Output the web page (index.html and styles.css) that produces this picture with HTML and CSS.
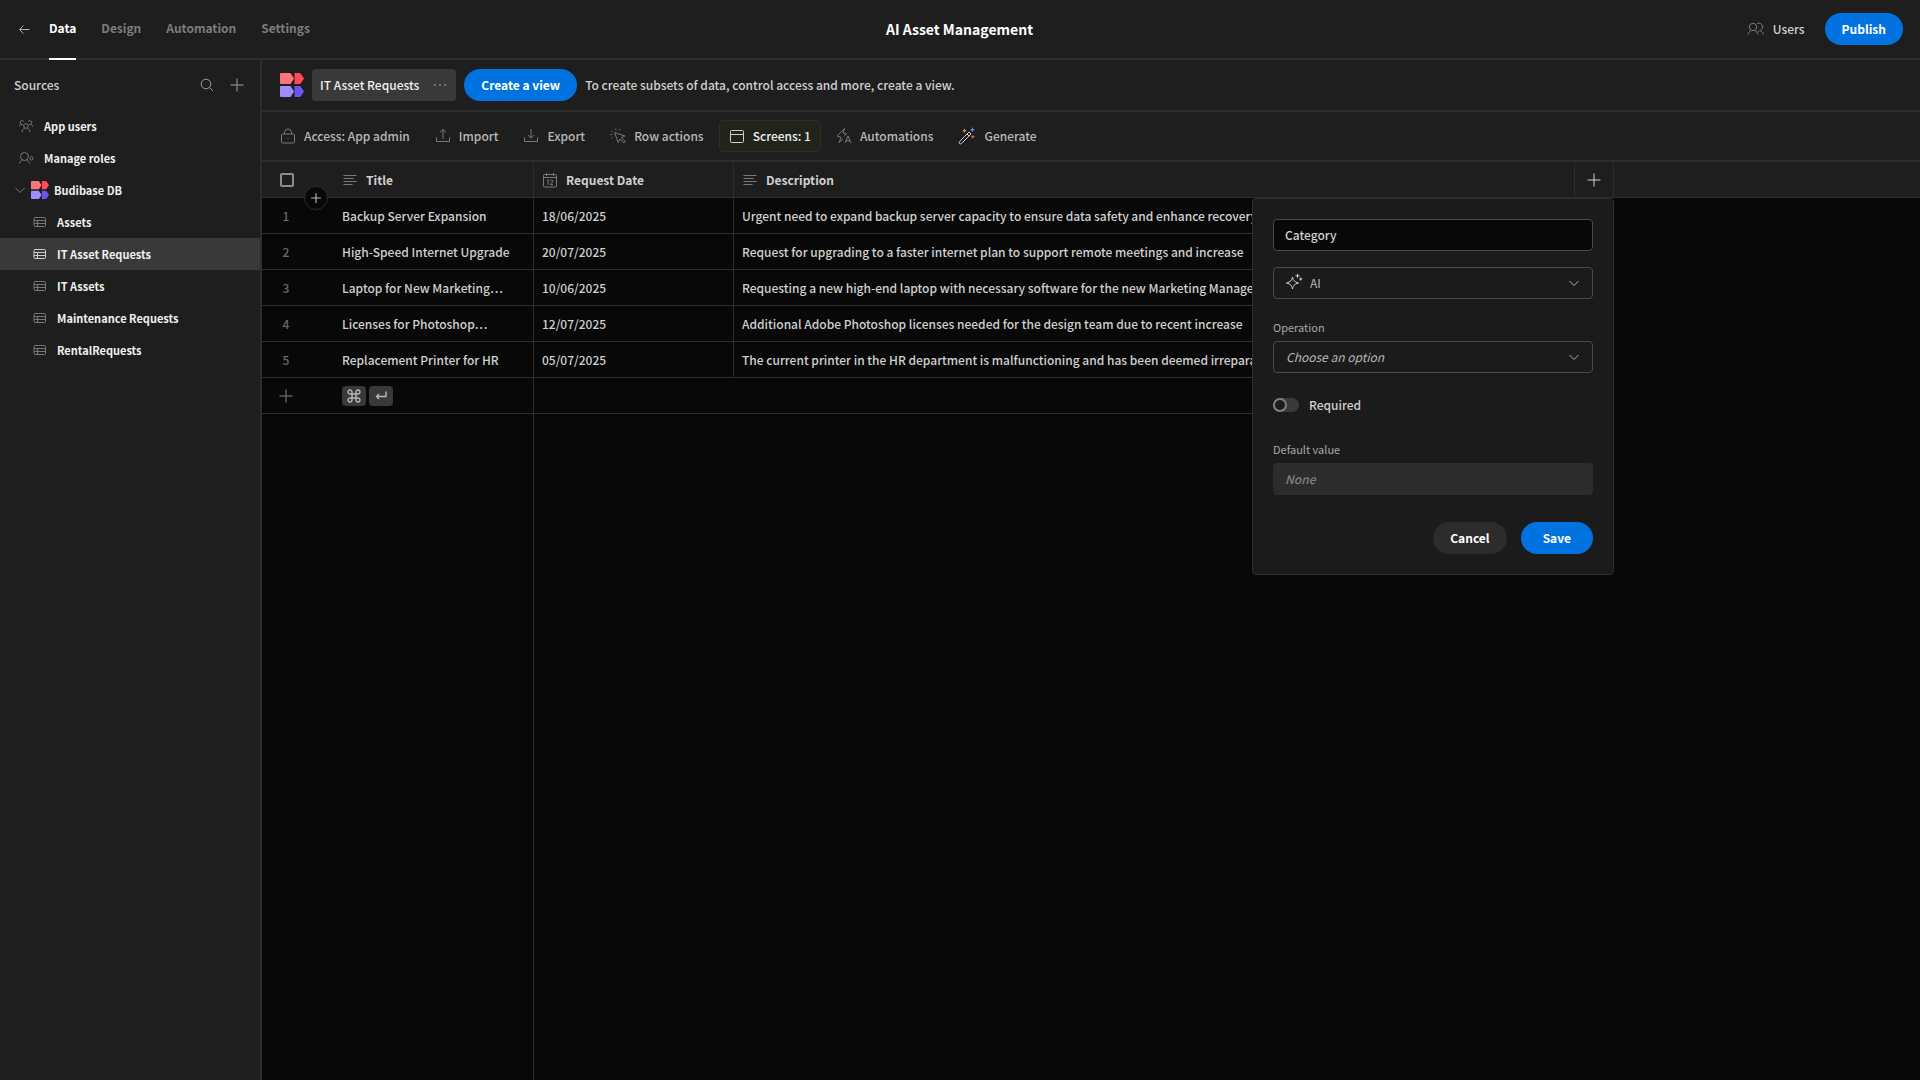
FILE: index.html
```html
<!DOCTYPE html>
<html lang="en">
<head>
  <meta charset="UTF-8">
  <meta name="viewport" content="width=device-width, initial-scale=1.0">
  <title>AI Asset Management</title>
  <link rel="stylesheet" href="styles.css">
</head>
<body>
  <!-- shared icon shapes -->
  <svg class="sprite" aria-hidden="true">
    <symbol id="logo" viewBox="0 0 24 24">
      <path fill="#ff737d" d="M0 1a1 1 0 0 1 1-1h9.500l3.500 5.500-3.500 5.500H1a1 1 0 0 1-1-1z"/>
      <path fill="#ff4b57" d="M14.500 0H19c1 0 1.500.3 2 1l3 4.500-3 4.500c-.5.7-1 1-2 1h-4.500z"/>
      <path fill="#9f8cff" d="M0 14a1 1 0 0 1 1-1h9.500l3.500 5.500-3.500 5.500H1a1 1 0 0 1-1-1z"/>
      <path fill="#6a55ee" d="M14.500 13H19c1 0 1.500.3 2 1l3 4.500-3 4.500c-.5.7-1 1-2 1h-4.500z"/>
    </symbol>
    <symbol id="plus" viewBox="0 0 16 16">
      <path d="M8 1.500v13M1.500 8h13"/>
    </symbol>
    <symbol id="chevron" viewBox="0 0 12 12">
      <path d="M1.500 4L6 8.500 10.500 4"/>
    </symbol>
    <symbol id="table" viewBox="0 0 14 12">
      <rect x="1" y="1.500" width="11.500" height="9" rx="1"/>
      <path d="M1 4.500h11.500M1 7.500h11.500M4.500 4.500v6"/>
    </symbol>
    <symbol id="text" viewBox="0 0 16 16">
      <path d="M1.500 3.500h13M1.500 6.500h10M1.500 9.500h13M1.500 12.500h9"/>
    </symbol>
  </svg>

  <div class="app">
    <header class="topbar">
      <nav class="tabs">
        <a href="#" class="back" aria-label="Back">
          <svg class="icon" viewBox="0 0 16 16"><path d="M13.500 8.500H3.500M7.500 4.500l-4 4 4 4"/></svg>
        </a>
        <a href="#" class="tab active">Data</a>
        <a href="#" class="tab">Design</a>
        <a href="#" class="tab">Automation</a>
        <a href="#" class="tab">Settings</a>
      </nav>
      <h1 class="app-title">AI Asset Management</h1>
      <div class="topbar-right">
        <button class="users">
          <svg class="icon icon-users" viewBox="0 0 18 16"><circle cx="6" cy="6" r="3.700"/><path d="M1 13.500c.4-2 1.600-3.300 3.300-4M11 13.500c-.4-2-1.600-3.300-3.300-4M10 2.700c3-1.500 5.500.3 5.500 3.300 0 2-1 3.300-2.500 3.700 1.800.5 3.100 1.800 3.500 3.800M12.500 9.800c-1 .2-1.700.8-2 1.500"/></svg>
          Users
        </button>
        <button class="btn btn-primary">Publish</button>
      </div>
    </header>

    <div class="workspace">
      <aside class="sidebar">
        <div class="sidebar-header">
          <span class="sidebar-title">Sources</span>
          <button class="icon-btn" aria-label="Search">
            <svg class="icon" viewBox="0 0 16 16"><circle cx="7" cy="7" r="4.800"/><path d="M10.500 10.500l3.300 3.300"/></svg>
          </button>
          <button class="icon-btn" aria-label="Add source">
            <svg class="icon"><use href="#plus"/></svg>
          </button>
        </div>
        <nav class="sources">
          <a href="#" class="source">
            <svg class="icon" viewBox="0 0 16 16"><circle cx="8" cy="8" r="2.300"/><path d="M4 14c.3-2 1.300-3.300 2.700-3.800M12 14c-.3-2-1.300-3.300-2.700-3.800M5 6.500a2 2 0 1 1 .8-3M11 6.500a2 2 0 1 0-.8-3M1.200 8.500c.3-1.300 1-2 2-2.200M14.800 8.500c-.3-1.300-1-2-2-2.200"/></svg>
            App users
          </a>
          <a href="#" class="source">
            <svg class="icon" viewBox="0 0 16 16"><circle cx="6.500" cy="6.500" r="4"/><path d="M1.500 13.500c.5-2 1.500-3 3-3.500M11.500 13.500c-.5-2-1.500-3-3-3.500M12 7.500l1.500-1.200L15 7.500v1.500l-1.500 1.200L12 9z"/></svg>
            Manage roles
          </a>
          <a href="#" class="source source-db">
            <svg class="icon icon-chevron"><use href="#chevron"/></svg>
            <svg class="logo-small"><use href="#logo"/></svg>
            Budibase DB
          </a>
          <a href="#" class="source source-table"><svg class="icon icon-table"><use href="#table"/></svg>Assets</a>
          <a href="#" class="source source-table selected"><svg class="icon icon-table"><use href="#table"/></svg>IT Asset Requests</a>
          <a href="#" class="source source-table"><svg class="icon icon-table"><use href="#table"/></svg>IT Assets</a>
          <a href="#" class="source source-table"><svg class="icon icon-table"><use href="#table"/></svg>Maintenance Requests</a>
          <a href="#" class="source source-table"><svg class="icon icon-table"><use href="#table"/></svg>RentalRequests</a>
        </nav>
      </aside>

      <main class="main">
        <div class="viewbar">
          <svg class="logo"><use href="#logo"/></svg>
          <button class="view-tab">
            IT Asset Requests
            <svg class="dots" viewBox="0 0 16 16"><circle cx="3" cy="8" r="1.100"/><circle cx="8" cy="8" r="1.100"/><circle cx="13" cy="8" r="1.100"/></svg>
          </button>
          <button class="btn btn-primary">Create a view</button>
          <span class="view-hint">To create subsets of data, control access and more, create a view.</span>
        </div>

        <div class="toolbar">
          <button class="tool">
            <svg class="icon" viewBox="0 0 16 16"><rect x="1.500" y="6" width="13" height="9" rx="1"/><path d="M4.500 6V4.500a3.500 3.500 0 0 1 7 0V6M8 10v1"/></svg>
            Access: App admin
          </button>
          <button class="tool">
            <svg class="icon" viewBox="0 0 16 16"><path d="M1.500 9.500v4h13v-4M8 11V1.500M4.800 4.500L8 1.500l3.200 3"/></svg>
            Import
          </button>
          <button class="tool">
            <svg class="icon" viewBox="0 0 16 16"><path d="M1.500 9.500v4h13v-4M8 1v9M4.800 7L8 10.200 11.200 7"/></svg>
            Export
          </button>
          <button class="tool">
            <svg class="icon" viewBox="0 0 16 16"><path d="M4.500 4.500l3.700 10 1.800-3.500 3.800 4 1.500-1.500-4-3.800 3.700-1.700zM1.500 3l1.200.7M.5 6.500h1.700M1.500 10l1.200-.7M6 2L5.500.6M9 2.200L9.800 1"/></svg>
            Row actions
          </button>
          <button class="tool tool-active">
            <svg class="icon" viewBox="0 0 16 16"><rect x="1.500" y="2.500" width="13" height="12" rx="1"/><path d="M1.500 6.500h13"/></svg>
            Screens: 1
          </button>
          <button class="tool">
            <svg class="icon" viewBox="0 0 16 16"><path d="M8.200 8.300L10.500 6 7 5l1.500-4.500L1 8l4 1.500-2 5 4-3.500M9 15l3-7 3 7M10 12.800h4"/></svg>
            Automations
          </button>
          <button class="tool">
            <svg class="icon icon-wand" viewBox="0 0 18 18"><path class="wand" d="M1.500 16.500c-1-1 0-2 .8-2.800L11 5l2 2-8.700 8.700c-.8.800-1.800 1.800-2.800.8zM9 7l2 2"/><path fill="#c9a63d" d="M6.500 1.500l.7 1.600 1.600.7-1.600.7-.7 1.600-.7-1.600-1.600-.7 1.600-.7z"/><path fill="#6e83e0" d="M14.500 0l.8 1.900 1.900.8-1.900.8-.8 1.900-.8-1.900-1.900-.8 1.900-.8z"/><path fill="#e0564a" d="M14.800 7.500l.7 1.600 1.600.7-1.600.7-.7 1.600-.7-1.600-1.600-.7 1.600-.7z"/></svg>
            Generate
          </button>
        </div>

        <div class="grid">
          <table class="data-table">
            <colgroup>
              <col class="col-gutter">
              <col class="col-title">
              <col class="col-date">
              <col class="col-desc">
              <col class="col-add">
              <col>
            </colgroup>
            <thead>
              <tr>
                <th class="gutter">
                  <input type="checkbox" class="check" aria-label="Select all rows">
                  <button class="add-row" aria-label="Add row"><svg class="icon"><use href="#plus"/></svg></button>
                </th>
                <th class="line"><div class="heading"><svg class="icon"><use href="#text"/></svg>Title</div></th>
                <th class="line"><div class="heading">
                  <svg class="icon" viewBox="0 0 16 16"><rect x="1.500" y="2.500" width="13" height="12.500" rx="1"/><path d="M1.500 5.500h13M4.500 1v3M11.500 1v3M5 8.500l1.200-.7v5M8.500 8.800c.3-1.300 2.500-1.200 2.300.4-.1 1-1.800 2.200-2.300 3.400h2.500"/></svg>
                  Request Date
                </div></th>
                <th class="line"><div class="heading"><svg class="icon"><use href="#text"/></svg>Description</div></th>
                <th class="line add-column">
                  <button class="icon-btn" aria-label="Add column"><svg class="icon"><use href="#plus"/></svg></button>

                  <form class="popover">
                    <input type="text" class="field" value="Category" aria-label="Column name">
                    <div class="picker has-icon">
                      <svg class="icon icon-ai" viewBox="0 0 18 18"><path d="M7.500 4c.7 3.500 2 4.800 6 6-4 1-5.300 2.500-6 6-.7-3.500-2-5-6-6 4-1.200 5.300-2.500 6-6zM12.500.8v4M10.500 2.800h4M15.700 4.500v3M14.200 6h3"/></svg>
                      <select class="field" aria-label="Type"><option>AI</option></select>
                      <svg class="icon icon-chevron"><use href="#chevron"/></svg>
                    </div>
                    <div class="form-item">
                      <label for="operation">Operation</label>
                      <div class="picker">
                        <select class="field placeholder" id="operation"><option>Choose an option</option></select>
                        <svg class="icon icon-chevron"><use href="#chevron"/></svg>
                      </div>
                    </div>
                    <label class="switch-row"><input type="checkbox" class="switch">Required</label>
                    <div class="form-item">
                      <label for="default-value">Default value</label>
                      <input type="text" class="field" id="default-value" placeholder="None" disabled>
                    </div>
                    <div class="actions">
                      <button type="button" class="btn btn-secondary">Cancel</button>
                      <button type="button" class="btn btn-primary btn-save">Save</button>
                    </div>
                  </form>
                </th>
                <th></th>
              </tr>
            </thead>
            <tbody>
              <tr>
                <td class="gutter">1</td>
                <td class="line">Backup Server Expansion</td>
                <td class="line">18/06/2025</td>
                <td class="line">Urgent need to expand backup server capacity to ensure data safety and enhance recovery</td>
                <td></td>
              </tr>
              <tr>
                <td class="gutter">2</td>
                <td class="line">High-Speed Internet Upgrade</td>
                <td class="line">20/07/2025</td>
                <td class="line">Request for upgrading to a faster internet plan to support remote meetings and increase</td>
                <td></td>
              </tr>
              <tr>
                <td class="gutter">3</td>
                <td class="line">Laptop for New Marketing…</td>
                <td class="line">10/06/2025</td>
                <td class="line">Requesting a new high-end laptop with necessary software for the new Marketing Manager</td>
                <td></td>
              </tr>
              <tr>
                <td class="gutter">4</td>
                <td class="line">Licenses for Photoshop…</td>
                <td class="line">12/07/2025</td>
                <td class="line">Additional Adobe Photoshop licenses needed for the design team due to recent increase</td>
                <td></td>
              </tr>
              <tr>
                <td class="gutter">5</td>
                <td class="line">Replacement Printer for HR</td>
                <td class="line">05/07/2025</td>
                <td class="line">The current printer in the HR department is malfunctioning and has been deemed irrepara</td>
                <td></td>
              </tr>
              <tr>
                <td class="gutter"><button class="icon-btn" aria-label="New row"><svg class="icon"><use href="#plus"/></svg></button></td>
                <td class="line">
                  <div class="keys">
                    <kbd><svg class="icon" viewBox="0 0 16 16"><path d="M6 6h4v4H6zM6 6H4.200A2 2 0 1 1 6 4.200zM10 6V4.200A2 2 0 1 1 11.800 6zM10 10h1.800A2 2 0 1 1 10 11.800zM6 10v1.800A2 2 0 1 1 4.200 10z"/></svg></kbd>
                    <kbd><svg class="icon" viewBox="0 0 16 16"><path d="M13 3.500V8.500H3.500M6 6L3.500 8.500 6 11"/></svg></kbd>
                  </div>
                </td>
                <td colspan="3"></td>
              </tr>
              <tr class="rest">
                <td></td>
                <td class="line"></td>
                <td colspan="3"></td>
              </tr>
            </tbody>
          </table>
        </div>
      </main>
    </div>
  </div>
</body>
</html>
```
FILE: styles.css
```css
* {
  box-sizing: border-box;
}

body {
  margin: 0;
  background: #080808;
  color: #d0d0d0;
  font-family: "Noto Sans CJK KR", "Noto Sans", sans-serif;
  font-size: 12px;
  font-weight: 500;
  line-height: 20px;
}

a {
  color: inherit;
  text-decoration: none;
}

button,
input,
select {
  font: inherit;
  color: inherit;
  margin: 0;
}

button {
  display: flex;
  align-items: center;
  background: none;
  border: none;
  padding: 0;
  white-space: nowrap;
  cursor: pointer;
}

.sprite {
  display: none;
}

.icon {
  width: 16px;
  height: 16px;
  flex: none;
  fill: none;
  stroke: #787878;
}

.icon-btn .icon {
  stroke: #a0a0a0;
}

.app {
  display: flex;
  flex-direction: column;
  height: 100vh;
}

/* Top bar */
.topbar {
  display: grid;
  grid-template-columns: 1fr auto 1fr;
  align-items: center;
  height: 60px;
  padding: 0 17px 0 16px;
  background: #1e1e1e;
  border-bottom: 2px solid #2d2d2d;
}

.tabs {
  display: flex;
  align-items: center;
  gap: 25px;
  font-weight: bold;
  color: #7c7c7c;
}

.back {
  display: flex;
  margin-right: -8px;
}

.back .icon {
  stroke: #b0b0b0;
}

.tab {
  height: 60px;
  padding-top: 18px;
  margin-bottom: -2px;
  border-bottom: 2px solid transparent;
}

.tab.active {
  color: #fff;
  border-color: #fff;
}

.app-title {
  margin: 0;
  font-size: 14px;
  font-weight: bold;
  color: #fff;
}

.topbar-right {
  display: flex;
  justify-content: flex-end;
  gap: 20px;
}

.users {
  gap: 8px;
}

.icon-users {
  width: 18px;
}

.btn {
  height: 32px;
  padding: 0 17px 1px;
  border-radius: 16px;
  font-weight: bold;
  color: #fff;
}

.btn-primary {
  background: #0073e0;
}

.btn-secondary {
  background: #2c2c2c;
}

.workspace {
  display: flex;
  flex: 1;
  min-height: 0;
}

/* Sidebar */
.sidebar {
  flex: none;
  width: 262px;
  background: #1e1e1e;
  border-right: 2px solid #2d2d2d;
}

.sidebar-header {
  display: flex;
  align-items: center;
  gap: 14px;
  height: 50px;
  padding: 0 15px 0 14px;
}

.sidebar-title {
  flex: 1;
}

.source {
  display: flex;
  align-items: center;
  gap: 10px;
  height: 32px;
  padding-left: 18px;
  font-size: 11px;
  font-weight: bold;
  color: #f0f0f0;
}

.source-db {
  gap: 5px;
  padding-left: 14px;
}

.source-table {
  padding-left: 33px;
}

.source.selected {
  background: #393939;
}

.source.selected .icon {
  stroke: #d0d0d0;
}

.icon-chevron {
  width: 12px;
  height: 12px;
}

.icon-table {
  width: 14px;
  height: 12px;
}

.logo-small {
  width: 18px;
  height: 18px;
}

/* View bar and toolbar */
.main {
  display: flex;
  flex-direction: column;
  flex: 1;
  min-width: 0;
}

.viewbar,
.toolbar {
  display: flex;
  flex: none;
  align-items: center;
  background: #1e1e1e;
  border-bottom: 2px solid #2d2d2d;
}

.viewbar {
  gap: 8px;
  height: 52px;
  padding-left: 18px;
}

.logo {
  width: 24px;
  height: 24px;
}

.view-tab {
  gap: 13px;
  height: 32px;
  padding: 0 8px;
  background: #393939;
  border-radius: 4px;
  color: #f0f0f0;
}

.dots {
  width: 16px;
  height: 16px;
  fill: #808080;
}

.toolbar {
  gap: 5px;
  height: 50px;
  padding-left: 8px;
}

.tool {
  gap: 8px;
  height: 32px;
  padding: 0 10px 1px;
  border-radius: 4px;
  color: #b8b8b8;
}

.tool-active {
  padding: 0 9px 1px;
  background: #21241a;
  border: 1px solid #2c3318;
  color: #f0f0f0;
}

.tool-active .icon {
  stroke: #d0d0d0;
}

.icon-wand {
  width: 18px;
  height: 18px;
  stroke: none;
}

.wand {
  stroke: #d0d0d0;
}

/* Data grid */
.grid {
  flex: 1;
  min-height: 0;
}

.data-table {
  width: 100%;
  height: 100%;
  table-layout: fixed;
  border-spacing: 0;
}

.col-gutter {
  width: 72px;
}

.col-title,
.col-date {
  width: 200px;
}

.col-desc {
  width: 841px;
}

.col-add {
  width: 39px;
}

th,
td {
  height: 36px;
  padding: 0 8px;
  border-bottom: 1px solid #2d2d2d;
  text-align: left;
  white-space: nowrap;
}

th {
  background: #1e1e1e;
}

.line {
  border-right: 1px solid #2d2d2d;
}

.heading {
  display: flex;
  align-items: center;
  gap: 8px;
}

.gutter {
  position: relative;
  padding: 0 18px;
  color: #6b6b6b;
}

td.gutter {
  padding: 0 42px 0 18px;
  text-align: center;
}

.gutter .icon-btn .icon {
  stroke: #808080;
}

td.gutter .icon-btn {
  margin-left: -2px;
}

.check {
  appearance: none;
  display: block;
  width: 14px;
  height: 14px;
  border: 2px solid #8c8c8c;
  border-radius: 2px;
}

.add-row {
  position: absolute;
  right: 6px;
  bottom: -13px;
  z-index: 1;
  justify-content: center;
  width: 24px;
  height: 24px;
  background: #080808;
  border: 1px solid #2d2d2d;
  border-radius: 50%;
}

.add-row .icon {
  width: 12px;
  height: 12px;
  stroke: #b8b8b8;
  stroke-width: 1.5;
}

.keys {
  display: flex;
  gap: 3px;
}

kbd {
  display: flex;
  align-items: center;
  justify-content: center;
  width: 24px;
  height: 20px;
  background: #393939;
  border-radius: 4px;
}

kbd .icon {
  stroke: #b8b8b8;
  stroke-width: 1.4;
}

.rest td {
  height: auto;
  border-bottom: none;
}

/* Column editor */
.add-column {
  position: relative;
  padding: 0 11px;
}

.add-column .icon-btn .icon {
  stroke: #d0d0d0;
}

.popover {
  position: absolute;
  top: calc(100% + 1px);
  right: -1px;
  z-index: 2;
  display: flex;
  flex-direction: column;
  gap: 16px;
  width: 362px;
  padding: 20px;
  background: #1b1b1b;
  border: 1px solid #2d2d2d;
  border-radius: 4px;
  font-weight: 500;
}

.field {
  display: block;
  width: 100%;
  height: 32px;
  padding: 0 11px 1px;
  background: #080808;
  border: 1px solid #4a4a4a;
  border-radius: 4px;
}

.field:disabled {
  background: #2c2c2c;
  border-color: #2c2c2c;
}

.field::placeholder {
  color: #808080;
  font-style: italic;
}

.picker {
  position: relative;
}

.picker .field {
  appearance: none;
  padding: 0 12px 1px;
  background: none;
  color: #b8b8b8;
  font-weight: normal;
}

.picker.has-icon .field {
  padding-left: 36px;
}

.picker .placeholder {
  font-style: italic;
}

.picker .icon {
  position: absolute;
  top: 10px;
  right: 13px;
  stroke: #b0b0b0;
}

.picker .icon-ai {
  top: 6px;
  left: 12px;
  width: 18px;
  height: 18px;
  stroke: #d0d0d0;
}

.form-item label {
  display: block;
  padding-bottom: 2px;
  font-size: 11px;
  font-weight: normal;
  line-height: 24px;
  color: #a8a8a8;
}

.switch-row {
  display: flex;
  align-items: center;
  gap: 10px;
  height: 32px;
}

.switch {
  appearance: none;
  display: flex;
  width: 26px;
  height: 14px;
  background: #393939;
  border-radius: 7px;
}

.switch::before {
  content: "";
  box-sizing: border-box;
  width: 14px;
  height: 14px;
  background: #1b1b1b;
  border: 2px solid #808080;
  border-radius: 50%;
}

.actions {
  display: flex;
  justify-content: flex-end;
  gap: 14px;
  margin-top: 11px;
}

.btn-save {
  padding: 0 22px 1px;
}
```
